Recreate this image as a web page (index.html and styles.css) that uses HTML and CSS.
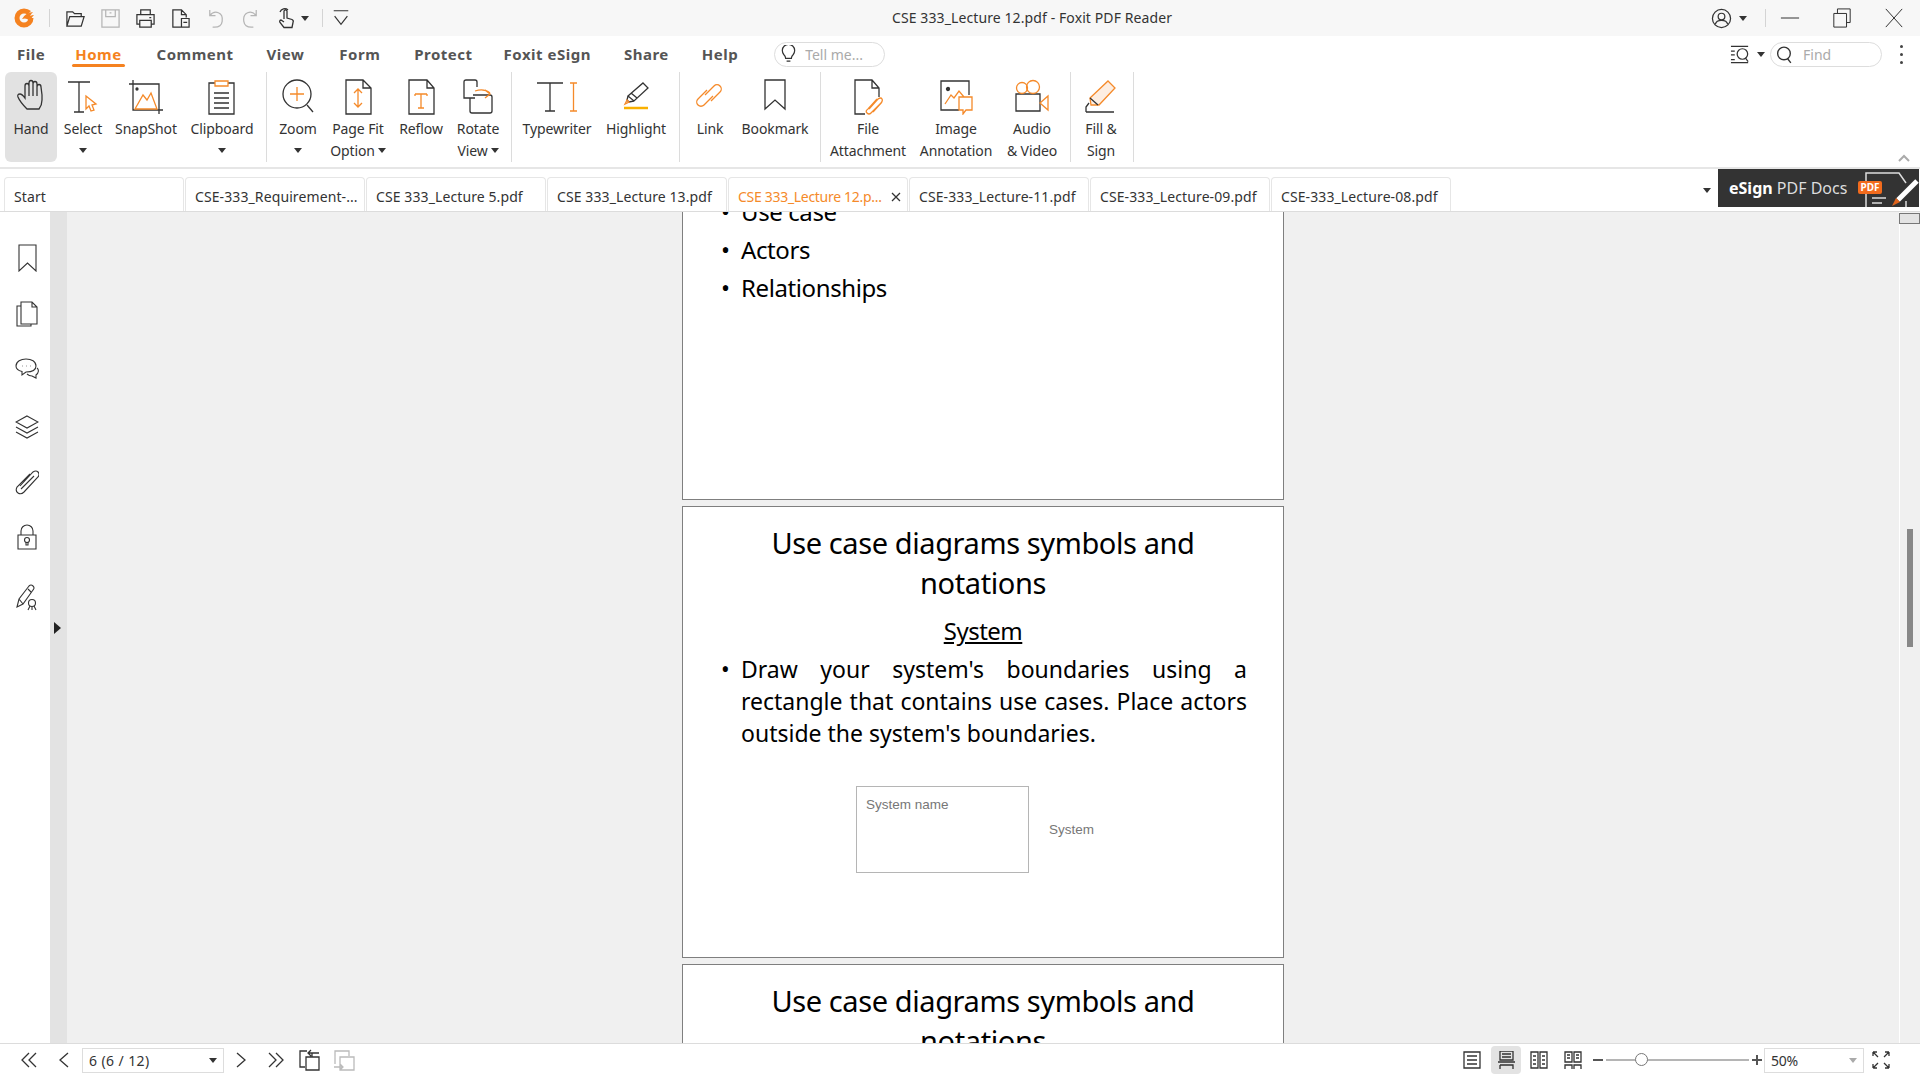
FILE: index.html
```html
<!DOCTYPE html>
<html lang="en">
<head>
    <meta charset="UTF-8">
    <title>CSE 333_Lecture 12.pdf - Foxit PDF Reader</title>
    <link rel="stylesheet" href="styles.css">
</head>
<body>
<svg class="sprites" width="0" height="0">
    <defs>
        <symbol id="bookmark" viewBox="0 0 24 28"><path d="M4 1h17v26l-8.500-8L4 27z"/></symbol>
    </defs>
</svg>

<div class="app">
    <!-- title bar -->
    <header class="titlebar">
        <div class="qat">
            <svg class="logo" width="22" height="22" viewBox="0 0 22 22"><path d="M11 1.500a9.500 9.500 0 1 0 9.500 9.500h-5a4.500 4.500 0 1 1-4.500-4.500q2 0 3.500 1l3.500-3.500Q15 1.500 11 1.500z" fill="#f58220"/><path d="M9 12q3-6 11-7-2 2-3 4 2-1 4-1-2 2-3 4 1 0 2 0-2 3-5 4 2-3-1-4-2-1-5 0z" fill="#f58220"/></svg>
            <span class="qat-sep"></span>
            <svg class="qi q-open" viewBox="0 0 22 22"><path d="M2 19V4h6l2 2h7v3M2 19l3-10h15l-3 10z"/></svg>
            <svg class="qi off" viewBox="0 0 22 22"><path d="M2 2h18v18H2zM6 2v7h10V2M10 5h2"/></svg>
            <svg class="qi" viewBox="0 0 22 22"><path d="M6 7V2h10v5M5 17H2V7h18v10h-3M5 13h12v7H5zM15 10h2"/></svg>
            <svg class="qi" viewBox="0 0 22 22"><path d="M12 20H3V2h9l5 5v3M12 2v5h5M12 11h8v9h-8zM14 15h4"/></svg>
            <svg class="qi off" viewBox="0 0 22 22"><path d="M5 2v6h6M5 8q4-5 9-3t4 9-10 6"/></svg>
            <svg class="qi off" viewBox="0 0 22 22"><path d="M17 2v6h-6M17 8q-4-5-9-3T4 14t10 6"/></svg>
            <svg class="qi qi-hand" viewBox="0 0 22 22"><path d="M9 12V4q1.500-2.500 3 0v7l5 1.500q2 1 1 3l-1 5H9l-4-5q-1-2 1-2.500l3 2"/><path d="M5 5a5 5 0 0 1 8-2"/></svg>
            <span class="caret"></span>
            <span class="qat-sep"></span>
            <svg class="qi qi-more" viewBox="0 0 22 22"><path d="M3 3h16M4 9l7 9 7-9"/></svg>
        </div>
        <div class="doc-title">CSE 333_Lecture 12.pdf - Foxit PDF Reader</div>
        <div class="win">
            <svg class="qi user" viewBox="0 0 22 22"><circle cx="11" cy="11" r="9.500"/><circle cx="11" cy="9" r="3.500"/><path d="M4.500 17q1-4 6.500-4t6.500 4"/></svg>
            <span class="caret"></span>
            <span class="qat-sep"></span>
            <svg class="win-btn" viewBox="0 0 22 22"><path d="M1 11h20"/></svg>
            <svg class="win-btn" viewBox="0 0 22 22"><path d="M2 6h14v15H2zM6 6V1h14v15h-4"/></svg>
            <svg class="win-btn" viewBox="0 0 22 22"><path d="M2 1l18 20M20 1L2 21"/></svg>
        </div>
    </header>

    <!-- menu row -->
    <nav class="menubar">
        <a class="menu-file">File</a>
        <a class="menu-home">Home</a>
        <a class="menu-comment">Comment</a>
        <a class="menu-view">View</a>
        <a class="menu-form">Form</a>
        <a class="menu-protect">Protect</a>
        <a class="menu-esign">Foxit eSign</a>
        <a class="menu-share">Share</a>
        <a class="menu-help">Help</a>
        <div class="pill pill-tell">
            <svg class="pill-icon" viewBox="0 0 16 20"><path d="M5 14q0-2-2-4a6.500 6.500 0 1 1 10 0q-2 2-2 4zM6 17h4"/></svg>
            <span>Tell me...</span>
        </div>
        <div class="menu-right">
            <svg class="find-icon" viewBox="0 0 22 20"><path d="M1 2h18M1 7h4M1 11h4M1 16h4M1 19h18"/><circle cx="13" cy="10" r="5.500"/><path d="M16 14l3 4"/></svg>
            <span class="caret"></span>
            <div class="pill pill-find">
                <svg class="pill-icon" viewBox="0 0 16 18"><circle cx="7.500" cy="8" r="6"/><path d="M11 13l3 4"/></svg>
                <span>Find</span>
            </div>
            <div class="dots"><i></i><i></i><i></i></div>
        </div>
    </nav>

    <!-- ribbon -->
    <section class="ribbon">
        <div class="group g-tools">
            <div class="tool active">
                <svg viewBox="-2 0 34 36"><path d="M11 30q-7-7-9-12-1-3 2-3 2 0 5 4V7q0-2.500 2-2.500T13 7V4q0-2.500 2-2.500T17 4v1q0-2.500 2-2.500T21 5v3q0-2.500 2-2.500T25 8l1 8v5q0 5-3 9z"/><path d="M13 7v10M17 5v12M21 8v9"/></svg>
                <span>Hand</span>
            </div>
            <div class="tool">
                <svg viewBox="0 0 34 36"><path d="M2 3h22M13 3v30M8 33h10"/><path class="o" d="M20 17l10 8-4 1 2 5-3 1-2-5-3 3z"/></svg>
                <span>Select</span><b class="caret"></b>
            </div>
            <div class="tool">
                <svg viewBox="0 0 34 36"><path d="M0 5h30v30M4 1v30h30"/><circle cx="8" cy="10" r="1" fill="#333"/><path class="o" d="M6 30l8-14 4 5 4-7 6 16z"/></svg>
                <span>SnapShot</span>
            </div>
            <div class="tool">
                <svg viewBox="0 0 34 36"><path d="M10 4H4v31h25V4h-6"/><path class="o" d="M10 2h13v5H10z"/><path d="M9 14h15M9 19h15M9 24h15M9 29h15"/></svg>
                <span>Clipboard</span><b class="caret"></b>
            </div>
        </div>
        <div class="group g-view">
            <div class="tool">
                <svg viewBox="0 0 34 36"><circle cx="16" cy="15" r="14"/><path d="M26 26l6 7"/><path class="o" d="M16 8v14M9 15h14"/></svg>
                <span>Zoom</span><b class="caret"></b>
            </div>
            <div class="tool">
                <svg viewBox="0 0 34 36"><path d="M5 1h17l8 8v26H5zM22 1v8h8"/><path class="o" d="M17 10v18M13 14l4-4 4 4M13 24l4 4 4-4"/></svg>
                <span>Page Fit</span><span>Option<b class="caret inline"></b></span>
            </div>
            <div class="tool">
                <svg viewBox="0 0 34 36"><path d="M5 1h18l7 8v26H5zM23 1v8h7"/><path class="o" d="M11 15h12M17 15v14M14 29h6M11 15v2M23 15v2"/></svg>
                <span>Reflow</span>
            </div>
            <div class="tool">
                <svg viewBox="0 0 34 36"><path d="M14 19H3V3q0-2 2-2h9q2 0 2 2v5M9 19v13q0 2 2 2h18q2 0 2-2V18q0-2-2-2H12"/><path class="o" d="M14 12q9-3 15 2M24 19l5-4-5-4"/></svg>
                <span>Rotate</span><span>View<b class="caret inline"></b></span>
            </div>
        </div>
        <div class="group g-type">
            <div class="tool">
                <svg class="wide" viewBox="0 0 44 36"><path d="M2 4h26M15 4v28M10 32h10"/><path class="o" d="M35 4h7M38.500 4v28M35 32h7"/></svg>
                <span>Typewriter</span>
            </div>
            <div class="tool">
                <svg viewBox="0 0 34 36"><path d="M24 4l5 5-14 13-6-5zM12 14l6 5M9 17l-1 4 2 2 5-1"/><path class="o" d="M8 21l2 2-4 2z"/><path class="y" d="M5 29h24"/></svg>
                <span>Highlight</span>
            </div>
        </div>
        <div class="group g-link">
            <div class="tool">
                <svg viewBox="0 0 34 36"><path class="o" d="M14 11l-9 9a4.200 4.200 0 0 0 6 6l9-9M12 16l9-9a4.200 4.200 0 0 1 6 6l-9 9"/></svg>
                <span>Link</span>
            </div>
            <div class="tool">
                <svg viewBox="0 0 34 36"><path d="M7 1h20v29l-10-9-10 9z"/></svg>
                <span>Bookmark</span>
            </div>
        </div>
        <div class="group g-media">
            <div class="tool">
                <svg viewBox="0 0 34 36"><path d="M14 35H4V1h17l7 8v9M21 1v8h7"/><path class="o" d="M18 30l9-10q3-2 4 0t-1 4L20 34q-2 2-4 0t1-4l9-10M22 33l9-10"/></svg>
                <span>File</span><span>Attachment</span>
            </div>
            <div class="tool">
                <svg viewBox="0 0 34 36"><path d="M20 31H2V2h28v14"/><circle cx="9" cy="10" r="1.500" fill="#333"/><path class="o" d="M6 25l6-9 3 3 5-7 5 6M20 18h13v13h-6l-3 4v-4h-4z"/></svg>
                <span>Image</span><span>Annotation</span>
            </div>
            <div class="tool">
                <svg viewBox="0 0 34 36"><path d="M1 15h24v17H1z"/><path class="o" d="M25 24l8-7v14z"/><circle class="o" cx="7" cy="9" r="5.500"/><circle class="o" cx="18" cy="8" r="6.500"/></svg>
                <span>Audio</span><span>&amp; Video</span>
            </div>
        </div>
        <div class="group g-fill">
            <div class="tool">
                <svg viewBox="0 0 34 36"><path class="f" d="M24 2l7 7-16 17H7l-1-7z"/><path d="M6 19l8 7M2 33h28M2 33v-5l3-4"/></svg>
                <span>Fill &amp;</span><span>Sign</span>
            </div>
        </div>
        <svg class="collapse" viewBox="0 0 12 8"><path d="M1 7l5-5 5 5"/></svg>
    </section>

    <!-- document tabs -->
    <div class="tabs">
        <div class="tab">Start</div>
        <div class="tab">CSE-333_Requirement-...</div>
        <div class="tab">CSE 333_Lecture 5.pdf</div>
        <div class="tab">CSE 333_Lecture 13.pdf</div>
        <div class="tab current"><span>CSE 333_Lecture 12.p...</span><svg viewBox="0 0 10 10"><path d="M1 1l8 8M9 1L1 9"/></svg></div>
        <div class="tab">CSE-333_Lecture-11.pdf</div>
        <div class="tab">CSE-333_Lecture-09.pdf</div>
        <div class="tab">CSE-333_Lecture-08.pdf</div>
        <span class="caret tabs-more"></span>
        <div class="promo">
            <span class="promo-text"><b>eSign</b> PDF Docs</span>
            <svg class="promo-art" viewBox="0 0 62 38"><path d="M9 38V4h33l7 10M49 32v6M15 29h14M15 34h10" fill="none" stroke="#ddd" stroke-width="1.500"/><path d="M60 12L41 31" stroke="#fff" stroke-width="5"/><path d="M39 29l4 4-8 4z" fill="#e0641c" stroke="none"/></svg>
            <span class="promo-badge">PDF</span>
        </div>
    </div>

    <!-- main area -->
    <main class="workspace">
        <aside class="sidebar">
            <svg viewBox="0 0 24 28"><use href="#bookmark"/></svg>
            <svg viewBox="0 0 24 28"><path d="M6 3h11l5 5v17H6zM17 3v5h5M6 7H2v20h14v-2"/></svg>
            <svg viewBox="0 0 24 28"><path d="M11 5c5.500 0 10 2.500 10 7 0 4-4 6-10 6l-4 3v-3.500c-4-1-6-3-6-5.500 0-4.500 5-7 10-7z"/><path d="M22 14c2 1.500 2 5-1 7v3l-4-2q-3 0-5-2"/><path d="M7 12h.5M11 12h.5M15 12h.5"/></svg>
            <svg viewBox="0 0 24 28"><path d="M12 4l11 6-11 6L1 10zM1 15l11 6 11-6M1 20l11 6 11-6"/></svg>
            <svg viewBox="0 0 24 28"><path d="M5 18L18 4q3-2 5 0t0 5L9 24q-3 3-6 1t-1-6L15 6M6 21L19 8"/></svg>
            <svg viewBox="0 0 24 28"><path d="M3 12h18v14H3zM6 12V8a6 6 0 0 1 12 0v4"/><circle cx="12" cy="17" r="2.500"/><path d="M11 19.500h2V22h-2z"/></svg>
            <svg viewBox="0 0 24 28"><path d="M2 24l2-8L14 3q2-2 4 0t0 4L8 21zM4 16l4 5M13 6l3 3"/><circle cx="17" cy="20" r="3.500"/><path d="M13 27l2-4M21 27l-2-4M17 24v3"/></svg>
        </aside>
        <div class="splitter"><span class="splitter-arrow"></span></div>
        <div class="viewer">
            <div class="pages">
                <article class="page">
                    <ul class="slide-list">
                        <li>Use case</li>
                        <li>Actors</li>
                        <li>Relationships</li>
                    </ul>
                </article>
                <article class="page">
                    <h1>Use case diagrams symbols and notations</h1>
                    <h2>System</h2>
                    <ul class="slide-text">
                        <li>Draw your system's boundaries using a rectangle that contains use cases. Place actors outside the system's boundaries.</li>
                    </ul>
                    <div class="diagram">
                        <div class="sys-box">System name</div>
                        <div class="sys-label">System</div>
                    </div>
                </article>
                <article class="page">
                    <h1>Use case diagrams symbols and notations</h1>
                </article>
            </div>
        </div>
        <div class="scrollbar">
            <span class="scroll-top"></span>
            <span class="scroll-thumb"></span>
        </div>
    </main>

    <!-- status bar -->
    <footer class="statusbar">
        <div class="nav-left">
            <svg class="st" viewBox="0 0 18 18"><path d="M9 2L2 9l7 7M16 2L9 9l7 7"/></svg>
            <svg class="st gap-prev" viewBox="0 0 18 18"><path d="M13 2L5 9l8 7"/></svg>
            <div class="combo page-combo"><span>6 (6 / 12)</span><span class="caret"></span></div>
            <svg class="st" viewBox="0 0 18 18"><path d="M5 2l8 7-8 7"/></svg>
            <svg class="st gap-last" viewBox="0 0 18 18"><path d="M2 2l7 7-7 7M9 2l7 7-7 7"/></svg>
            <svg class="st gap-hist" viewBox="0 0 22 22"><path d="M8 2H1v16h5M7 8h13v13H7zM20 4H9M12 1L9 4l3 3M13 4v4"/></svg>
            <svg class="st off gap-hist2" viewBox="0 0 22 22"><path d="M2 15V2h14v5M7 8h14v13H7zM1 18h9M7 15l3 3-3 3"/></svg>
        </div>
        <div class="nav-right">
            <svg class="st" viewBox="0 0 18 18"><path d="M1 1h16v16H1zM4 5h10M4 9h10M4 13h10"/></svg>
            <div class="st-active"><svg class="st" viewBox="0 0 18 18"><path d="M3 0h13v9H3zM5 3h9M5 6h9M1 11h17M3 14h13v4M3 14v4"/></svg></div>
            <svg class="st" viewBox="0 0 18 18"><path d="M1 1h7v16H1zM10 1h7v16h-7zM3 5h3M3 9h3M3 13h3M12 5h3M12 9h3M12 13h3"/></svg>
            <svg class="st" viewBox="0 0 18 18"><path d="M1 1h7v10H1zM10 1h7v10h-7zM3 4h3M3 7h3M12 4h3M12 7h3M1 18v-4h7v4M10 18v-4h7v4"/></svg>
            <div class="zoom-slider">
                <span class="zoom-minus"></span>
                <div class="zoom-track"><span class="zoom-knob"></span></div>
                <span class="zoom-plus"></span>
            </div>
            <div class="combo zoom-combo"><span>50%</span><span class="caret pale"></span></div>
            <svg class="st full" viewBox="0 0 18 18"><path d="M1 1l5 5M1 1v4M1 1h4M17 1l-5 5M17 1v4M17 1h-4M1 17l5-5M1 17v-4M1 17h4M17 17l-5-5M17 17v-4M17 17h-4"/></svg>
        </div>
    </footer>
</div>
</body>
</html>
```

FILE: styles.css
```css
* {
    box-sizing: border-box;
}
html, body {
    margin: 0;
    height: 100%;
    overflow: hidden;
}
body {
    font-family: "Noto Sans", "Open Sans", sans-serif;
    font-size: 14px;
    color: #333;
    background: #fff;
}
svg {
    display: block;
    flex: none;
    fill: none;
    stroke: #333;
    stroke-width: 1.3;
}
.sprites {
    position: absolute;
}
.app {
    display: flex;
    flex-direction: column;
    width: 1920px;
    height: 1080px;
}
.caret {
    display: inline-block;
    flex: none;
    width: 0;
    height: 0;
    border-left: 4.500px solid transparent;
    border-right: 4.500px solid transparent;
    border-top: 5px solid #333;
}
.caret.pale {
    border-top-color: #aaa;
}

/* title bar */
.titlebar {
    display: flex;
    align-items: center;
    position: relative;
    height: 36px;
    background: #f7f7f7;
}
.qat {
    display: flex;
    align-items: center;
    padding-left: 13px;
}
.logo {
    margin-right: 14px;
    stroke: none;
}
.qat-sep {
    width: 1px;
    height: 18px;
    background: #d4d4d4;
}
.qi {
    width: 21px;
    height: 21px;
    margin-left: 14px;
}
.q-open {
    margin-left: 15px;
}
.qi.off {
    stroke: #b5b5b5;
}
.qi-hand {
    width: 22px;
    height: 24px;
    margin-right: 4px;
}
.qat .caret {
    margin-right: 13px;
}
.qi-more {
    width: 20px;
    height: 20px;
    margin-left: 8px;
}
.doc-title {
    position: absolute;
    left: 892px;
    top: 0;
    line-height: 36px;
    letter-spacing: 0.1px;
}
.win {
    display: flex;
    align-items: center;
    margin-left: auto;
    padding-right: 16px;
}
.win .user {
    width: 21px;
    height: 21px;
    margin-right: 7px;
}
.win .qat-sep {
    margin: 0 14px 0 18px;
}
.win-btn {
    width: 20px;
    height: 20px;
    stroke-width: 1.1;
    margin-right: 32px;
}
.win-btn:last-child {
    margin-right: 0;
}

/* menu */
.menubar {
    display: flex;
    align-items: center;
    height: 36px;
    position: relative;
    font-size: 15px;
    font-weight: 700;
    color: #555;
}
.menubar a {
    position: relative;
    letter-spacing: 0.5px;
}
.menu-file { margin-left: 17px; }
.menu-home { margin-left: 30px; color: #f58220; }
.menu-home::after {
    content: "";
    position: absolute;
    left: -3px;
    right: -3px;
    bottom: -3px;
    height: 3px;
    border-radius: 2px;
    background: #f58220;
}
.menu-comment { margin-left: 35px; }
.menu-view { margin-left: 33px; }
.menu-form { margin-left: 35px; }
.menu-protect { margin-left: 34px; }
.menu-esign { margin-left: 31px; }
.menu-share { margin-left: 33px; }
.menu-help { margin-left: 33px; }
.pill {
    display: flex;
    align-items: center;
    height: 25px;
    border: 1px solid #ddd;
    border-radius: 13px;
    font-size: 14px;
    font-weight: 400;
    color: #aaa;
}
.pill-icon {
    width: 17px;
    height: 19px;
}
.pill-tell {
    width: 111px;
    margin-left: 36px;
    padding-left: 5px;
    gap: 8px;
}
.menu-right {
    display: flex;
    align-items: center;
    margin-left: auto;
}
.find-icon {
    width: 21px;
    height: 20px;
}
.menu-right .caret {
    margin: 0 5px 0 6px;
}
.pill-find {
    width: 112px;
    padding-left: 5px;
    gap: 10px;
}
.dots {
    display: flex;
    flex-direction: column;
    gap: 5px;
    margin: 0 17px 0 18px;
}
.dots i {
    width: 3px;
    height: 3px;
    border-radius: 50%;
    background: #444;
}

/* ribbon */
.ribbon {
    display: flex;
    position: relative;
    height: 97px;
    padding-left: 5px;
    border-bottom: 2px solid #e6e6e6;
}
.group {
    display: grid;
    height: 90px;
    padding-right: 5px;
    border-right: 1px solid #dcdcdc;
}
.g-tools { grid-template-columns: 52px 52px 74px 78px; }
.g-view { grid-template-columns: 62px 58px 68px 46px; padding-right: 10px; }
.g-type { grid-template-columns: 90px 68px; padding-right: 9px; }
.g-link { grid-template-columns: 60px 70px; padding-right: 10px; }
.g-media { grid-template-columns: 94px 82px 70px; padding-right: 3px; }
.g-fill { grid-template-columns: 60px; padding-right: 2px; }
.tool {
    display: flex;
    flex-direction: column;
    align-items: center;
    height: 90px;
    padding-top: 7px;
    line-height: 22px;
    letter-spacing: -0.1px;
    white-space: nowrap;
}
.tool svg {
    width: 34px;
    height: 36px;
    margin-bottom: 3px;
}
.tool svg.wide {
    width: 44px;
}
.tool .o {
    stroke: #f58a2a;
}
.tool .y {
    stroke: #f9b000;
    stroke-width: 2.500;
}
.tool .f {
    stroke: #f58a2a;
    fill: #fdeee2;
}
.tool.active {
    background: #e2e2e2;
    border-radius: 6px;
}
.tool > .caret {
    margin-top: 8px;
}
.caret.inline {
    margin-left: 3px;
    vertical-align: 3px;
}
.collapse {
    position: absolute;
    right: 10px;
    bottom: 5px;
    width: 12px;
    height: 8px;
    stroke: #aaa;
    stroke-width: 2;
}

/* tabs */
.tabs {
    display: flex;
    align-items: flex-end;
    height: 43px;
    padding-left: 4px;
    position: relative;
    border-bottom: 1px solid #dcdcdc;
    letter-spacing: 0.1px;
}
.tab {
    display: flex;
    align-items: center;
    justify-content: space-between;
    width: 180px;
    height: 34px;
    margin-right: 1px;
    padding: 4px 6px 0 9px;
    border: 1px solid #e6e6e6;
    border-bottom: 0;
    border-radius: 4px 4px 0 0;
    white-space: nowrap;
}
.tab.current {
    color: #f58a2a;
    letter-spacing: -0.3px;
}
.tab.current svg {
    width: 10px;
    height: 10px;
    stroke: #333;
}
.tabs-more {
    align-self: center;
    margin-left: 251px;
}
.promo {
    display: flex;
    align-items: center;
    align-self: flex-start;
    position: relative;
    width: 201px;
    height: 38px;
    margin-left: 7px;
    padding-left: 11px;
    background: #333;
    color: #ddd;
    overflow: hidden;
}
.promo-text {
    font-size: 16px;
    letter-spacing: 0;
    white-space: nowrap;
}
.promo-text b {
    color: #fff;
}
.promo-art {
    position: absolute;
    right: 0;
    top: 0;
    width: 62px;
    height: 38px;
}
.promo-badge {
    position: absolute;
    left: 140px;
    top: 12px;
    width: 24px;
    font-size: 10px;
    font-weight: 700;
    line-height: 13px;
    letter-spacing: 0;
    text-align: center;
    color: #fff;
    background: #f26b1d;
    border-radius: 2px;
}

/* main */
.workspace {
    display: flex;
    flex: 1;
    min-height: 0;
}
.sidebar {
    display: flex;
    flex-direction: column;
    align-items: center;
    gap: 27px;
    width: 50px;
    padding: 32px 0 0 3px;
}
.sidebar svg {
    width: 24px;
    height: 28px;
    stroke-width: 1.1;
}
.sidebar svg:nth-child(4) { margin-top: 3px; }
.sidebar svg:nth-child(5) { margin-top: 1px; }
.sidebar svg:nth-child(7) { margin-top: 5px; }
.splitter {
    display: flex;
    width: 17px;
    background: #e3e3e3;
    position: relative;
}
.splitter-arrow {
    position: absolute;
    left: 4px;
    top: 410px;
    width: 0;
    height: 0;
    border-top: 6px solid transparent;
    border-bottom: 6px solid transparent;
    border-left: 7px solid #222;
}
.viewer {
    flex: 1;
    overflow: hidden;
    background: #f0f0f0;
}
.pages {
    display: flex;
    flex-direction: column;
    align-items: center;
    gap: 6px;
    margin-top: -164px;
}
.page {
    width: 602px;
    height: 452px;
    flex: none;
    padding: 0 30px;
    background: #fff;
    border: 1px solid #7f7f7f;
    color: #000;
}
.page h1 {
    margin: 16px 0 0;
    font-size: 29px;
    font-weight: 400;
    line-height: 40px;
    text-align: center;
    letter-spacing: -0.4px;
}
.page h2 {
    margin: 12px 0 0;
    font-size: 24px;
    font-weight: 400;
    line-height: 32px;
    text-align: center;
    text-decoration: underline;
    letter-spacing: -0.5px;
}
.page ul {
    margin: 0;
    padding: 0 6px 0 28px;
    list-style: none;
}
.page li {
    position: relative;
}
.page li::before {
    content: "•";
    position: absolute;
    left: -20px;
}
.page .slide-list {
    padding-top: 144px;
    font-size: 24px;
    line-height: 38px;
    letter-spacing: -0.4px;
}
.page .slide-text {
    margin-top: 6px;
    font-size: 23px;
    line-height: 32px;
    text-align: justify;
}
.diagram {
    display: flex;
    align-items: center;
    margin: 37px 0 0 143px;
    font-family: "Liberation Sans", sans-serif;
    font-size: 13.500px;
    color: #777;
}
.sys-box {
    width: 173px;
    height: 87px;
    padding: 10px 9px;
    border: 1px solid #b5b5b5;
    line-height: 16px;
}
.sys-label {
    margin-left: 20px;
}
.scrollbar {
    position: relative;
    width: 21px;
    background: #f0f0f0;
    border-left: 1px solid #fff;
}
.scroll-top {
    display: block;
    height: 11px;
    margin: 1px 0 0 -1px;
    background: #e3e3e3;
    border: 1px solid #777;
}
.scroll-thumb {
    position: absolute;
    left: 7px;
    top: 317px;
    width: 6px;
    height: 118px;
    background: #888;
}

/* status bar */
.statusbar {
    display: flex;
    align-items: center;
    justify-content: space-between;
    height: 37px;
    flex: none;
    padding-bottom: 4px;
    border-top: 1px solid #dcdcdc;
}
.nav-left, .nav-right {
    display: flex;
    align-items: center;
}
.nav-left {
    padding-left: 20px;
}
.st {
    width: 18px;
    height: 18px;
}
.st.off {
    stroke: #bbb;
}
.gap-prev { margin: 0 9px 0 17px; }
.gap-last { margin-left: 17px; }
.gap-hist, .gap-hist2 { width: 22px; height: 22px; }
.gap-hist { margin-left: 14px; }
.gap-hist2 { margin-left: 12px; }
.combo {
    display: flex;
    align-items: center;
    justify-content: space-between;
    height: 25px;
    padding: 0 6px;
    border: 1px solid #ddd;
    letter-spacing: -0.2px;
}
.page-combo {
    width: 142px;
    margin-right: 8px;
    letter-spacing: 0.4px;
}
.nav-right {
    padding-right: 30px;
}
.nav-right > .st:first-child { margin-right: 10px; }
.st-active {
    display: flex;
    align-items: center;
    justify-content: center;
    width: 30px;
    height: 28px;
    margin-right: 9px;
    border-radius: 4px;
    background: #e3e3e3;
}
.nav-right > .st-active + .st { margin-right: 16px; }
.zoom-slider {
    display: flex;
    align-items: center;
    margin-left: 11px;
}
.zoom-minus {
    width: 10px;
    height: 2px;
    background: #555;
    margin-right: 3px;
}
.zoom-track {
    position: relative;
    width: 143px;
    height: 2px;
    background: #b5b5b5;
}
.zoom-knob {
    position: absolute;
    left: 29px;
    top: -6px;
    width: 13px;
    height: 13px;
    border: 1px solid #777;
    border-radius: 50%;
    background: #fff;
}
.zoom-plus {
    position: relative;
    width: 10px;
    height: 2px;
    margin-left: 3px;
    background: #555;
}
.zoom-plus::after {
    content: "";
    position: absolute;
    left: 4px;
    top: -4px;
    width: 2px;
    height: 10px;
    background: #555;
}
.zoom-combo {
    width: 100px;
    margin-left: 2px;
}
.full {
    margin-left: 8px;
}
```
